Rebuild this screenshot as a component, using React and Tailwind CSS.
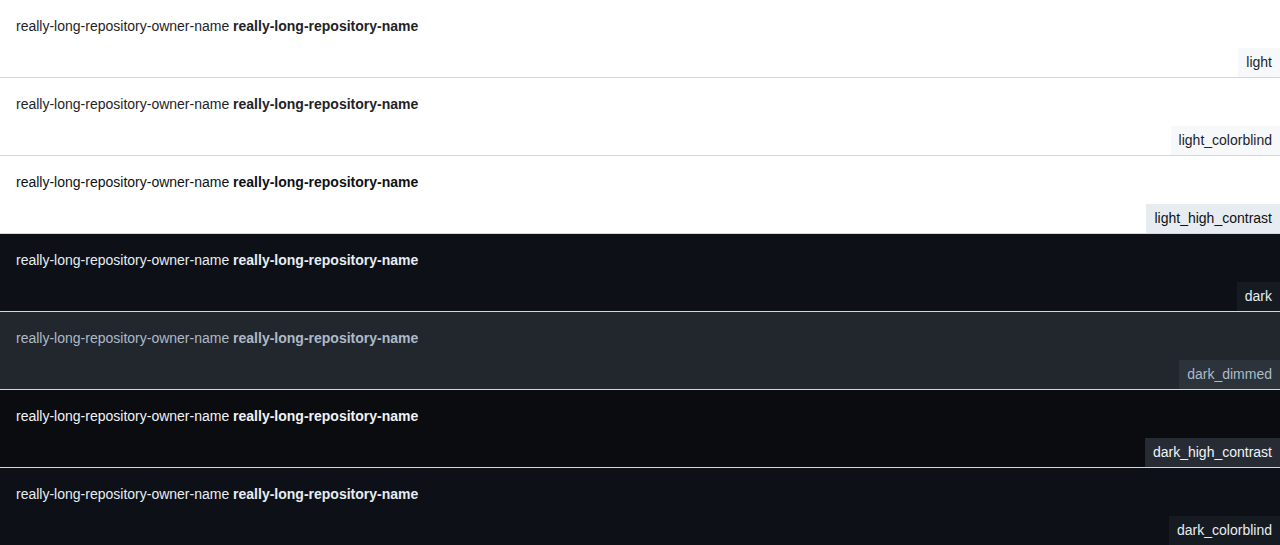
import React from "react";

const themes = [
  { name: "light", bg: "bg-[#ffffff]", fg: "text-[#1f2328]", label: "bg-[#f6f8fa]" },
  { name: "light_colorblind", bg: "bg-[#ffffff]", fg: "text-[#1f2328]", label: "bg-[#f6f8fa]" },
  { name: "light_high_contrast", bg: "bg-[#ffffff]", fg: "text-[#0e1116]", label: "bg-[#e7ecf0]" },
  { name: "dark", bg: "bg-[#0d1117]", fg: "text-[#e6edf3]", label: "bg-[#161b22]" },
  { name: "dark_dimmed", bg: "bg-[#22272e]", fg: "text-[#adbac7]", label: "bg-[#2d333b]" },
  { name: "dark_high_contrast", bg: "bg-[#0a0c10]", fg: "text-[#f0f3f6]", label: "bg-[#272b33]" },
  { name: "dark_colorblind", bg: "bg-[#0d1117]", fg: "text-[#e6edf3]", label: "bg-[#161b22]" },
];

export default function App() {
  return (
    <div className="w-[1280px] h-[545px] overflow-hidden font-['Liberation_Sans',Arial,sans-serif]">
      {themes.map((t) => (
        <div
          key={t.name}
          className={`flex flex-col h-[78px] border-b border-[#d0d7de] ${t.bg} ${t.fg}`}
        >
          <div className="px-4 pt-4 text-sm leading-5">
            really-long-repository-owner-name <span className="font-bold">really-long-repository-name</span>
          </div>
          <div className={`mt-auto self-end px-2 pt-1 pb-[5px] text-sm leading-5 ${t.label}`}>{t.name}</div>
        </div>
      ))}
    </div>
  );
}
